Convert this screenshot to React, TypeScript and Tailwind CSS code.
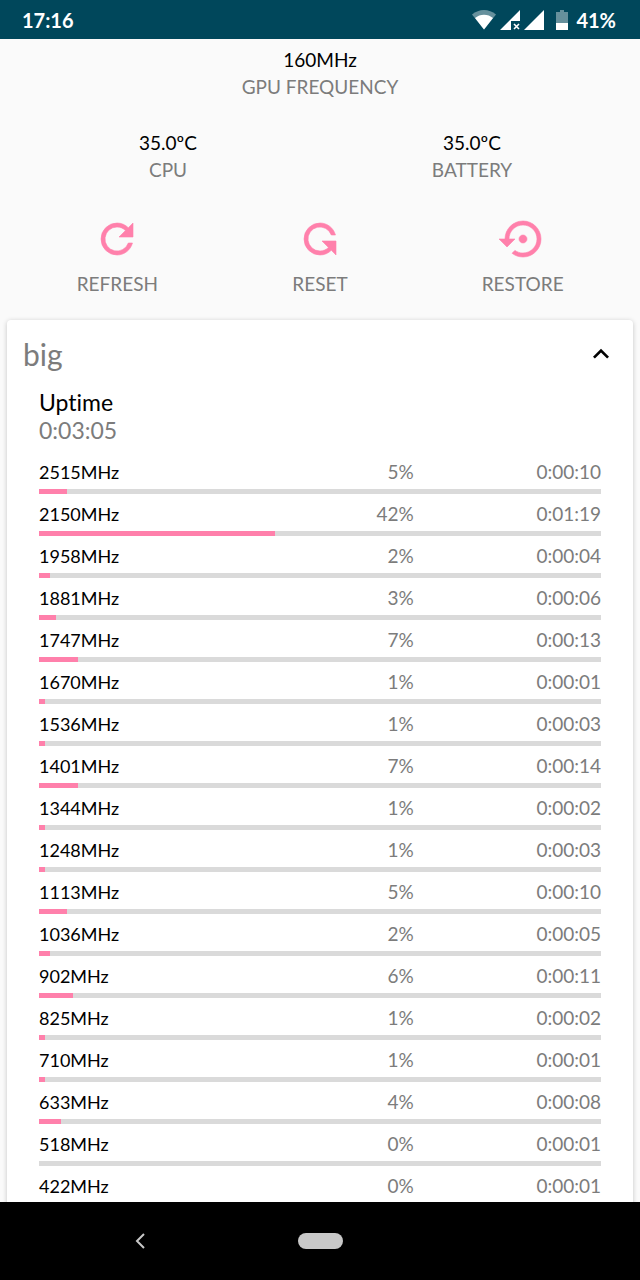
import React from 'react';

interface FrequencyState {
  frequency: number;
  percent: number;
  time: string;
}

const states: FrequencyState[] = [
  { frequency: 2515, percent: 5, time: '0:00:10' },
  { frequency: 2150, percent: 42, time: '0:01:19' },
  { frequency: 1958, percent: 2, time: '0:00:04' },
  { frequency: 1881, percent: 3, time: '0:00:06' },
  { frequency: 1747, percent: 7, time: '0:00:13' },
  { frequency: 1670, percent: 1, time: '0:00:01' },
  { frequency: 1536, percent: 1, time: '0:00:03' },
  { frequency: 1401, percent: 7, time: '0:00:14' },
  { frequency: 1344, percent: 1, time: '0:00:02' },
  { frequency: 1248, percent: 1, time: '0:00:03' },
  { frequency: 1113, percent: 5, time: '0:00:10' },
  { frequency: 1036, percent: 2, time: '0:00:05' },
  { frequency: 902, percent: 6, time: '0:00:11' },
  { frequency: 825, percent: 1, time: '0:00:02' },
  { frequency: 710, percent: 1, time: '0:00:01' },
  { frequency: 633, percent: 4, time: '0:00:08' },
  { frequency: 518, percent: 0, time: '0:00:01' },
  { frequency: 422, percent: 0, time: '0:00:01' },
];

const REFRESH_PATH =
  'M17.65 6.35C16.2 4.9 14.21 4 12 4a8 8 0 0 0 0 16c3.73 0 6.84-2.55 7.73-6h-2.08A6 6 0 1 1 12 6c1.66 0 3.14.69 4.22 1.78L13 11h7V4z';

const RESTORE_PATH =
  'M14 12c0-1.1-.9-2-2-2s-2 .9-2 2 .9 2 2 2 2-.9 2-2zm-2-9c-4.97 0-9 4.03-9 9H0l4 4 4-4H5c0-3.87 3.13-7 7-7s7 3.13 7 7-3.13 7-7 7c-1.51 0-2.91-.49-4.06-1.3l-1.42 1.44C8.04 20.3 9.94 21 12 21c4.97 0 9-4.03 9-9s-4.03-9-9-9z';

const StatusBar: React.FC = () => (
  <header className="flex h-[39px] shrink-0 items-center justify-between bg-[#00475b] pl-[22px] pr-6 text-xl font-bold text-white">
    <span>17:16</span>
    <div className="flex items-center gap-1">
      <svg className="h-5 w-6" viewBox="0 0 24 20" fill="currentColor" aria-label="Wi-Fi">
        <path d="M0 4.5C7-1.5 17-1.5 24 4.5L12 19.5z" opacity="0.4" />
        <path d="M3 8C8 3.500 16 3.500 21 8L12 19.500z" />
      </svg>
      <svg className="h-5 w-5" viewBox="0 0 20 20" fill="currentColor" aria-label="No data on SIM 1">
        <path d="M20 0v11h-9v9H0z" />
        <path d="M14 14l5 5M19 14l-5 5" fill="none" stroke="currentColor" strokeWidth="1.6" />
      </svg>
      <svg className="h-5 w-5" viewBox="0 0 20 20" fill="currentColor" aria-label="SIM 2 signal">
        <path d="M20 0v20H0z" />
      </svg>
      <svg className="ml-2 mr-1 h-5 w-3" viewBox="0 0 12 20" fill="currentColor" aria-label="Battery">
        <path d="M4 0h4v2h4v11H0V2h4z" opacity="0.4" />
        <path d="M0 13h12v7H0z" />
      </svg>
      <span>41%</span>
    </div>
  </header>
);

const Reading: React.FC<{ value: string; label: string }> = ({ value, label }) => (
  <div className="text-center text-[19px] leading-[27px]">
    <p className="text-black">{value}</p>
    <p className="text-[#7c7c7c]">{label}</p>
  </div>
);

const ActionButton: React.FC<{ label: string; path: string; flipped?: boolean }> = ({ label, path, flipped = false }) => (
  <button type="button" className="flex flex-col items-center gap-[7px] text-[19px] leading-[27px] text-[#7c7c7c]">
    <svg
      className={`size-12 text-[#ff80ab] ${flipped ? '-scale-y-100' : ''}`}
      viewBox="0 0 24 24"
      fill="currentColor"
      stroke="currentColor"
      strokeWidth="0.3"
    >
      <path d={path} />
    </svg>
    {label}
  </button>
);

const FrequencyRow: React.FC<FrequencyState> = ({ frequency, percent, time }) => (
  <li className="h-[42px]">
    <div className="grid grid-cols-3 text-[19px] leading-7 text-[#7c7c7c]">
      <span className="text-lg leading-7 text-black">{frequency}MHz</span>
      <span className="text-right">{percent}%</span>
      <span className="text-right">{time}</span>
    </div>
    <div className="mt-[3px] h-[5px] bg-[#dadada]">
      <div className="h-full bg-[#ff80ab]" style={{ width: `${percent}%` }}></div>
    </div>
  </li>
);

const App: React.FC = () => {
  return (
    <div className="flex h-dvh flex-col bg-[#fafafa] font-['Lato',sans-serif] [font-variant-ligatures:none]">
      <StatusBar />

      <main className="min-h-0 flex-1 overflow-hidden pt-[7px]">
        <Reading value="160MHz" label="GPU FREQUENCY" />

        <div className="mt-[29px] grid grid-cols-2 px-4">
          <Reading value="35.0ºC" label="CPU" />
          <Reading value="35.0ºC" label="BATTERY" />
        </div>

        <div className="mt-8 grid grid-cols-3 px-4">
          <ActionButton label="REFRESH" path={REFRESH_PATH} />
          <ActionButton label="RESET" path={REFRESH_PATH} flipped />
          <ActionButton label="RESTORE" path={RESTORE_PATH} />
        </div>

        <section className="mx-[7px] mt-[23px] rounded-sm bg-white shadow-[0_1px_5px_rgba(0,0,0,0.22)]">
          <div className="flex items-center justify-between py-[14px] pl-4 pr-4">
            <h2 className="text-3xl leading-10 text-[#7c7c7c]">big</h2>
            <button type="button" aria-label="Collapse">
              <svg className="size-8" viewBox="0 0 24 24" fill="black">
                <path d="M12 8l-6 6 1.41 1.41L12 10.83l4.590 4.580L18 14z" />
              </svg>
            </button>
          </div>

          <div className="px-8 text-[23px] leading-7">
            <p className="text-black">Uptime</p>
            <p className="text-[#7c7c7c]">0:03:05</p>
          </div>

          <ul className="mt-[14px] px-8">
            {states.map((state) => (
              <FrequencyRow key={state.frequency} {...state} />
            ))}
          </ul>
        </section>
      </main>

      <nav className="grid h-[78px] shrink-0 grid-cols-[7fr_2fr_7fr] items-center bg-black text-[#c8c8c8]">
        <button type="button" aria-label="Back" className="justify-self-center">
          <svg className="size-5" viewBox="0 0 20 20" fill="none" stroke="currentColor" strokeWidth="2">
            <path d="M14 3L7 10l7 7" />
          </svg>
        </button>
        <button type="button" aria-label="Home" className="h-4 w-[45px] justify-self-center rounded-full bg-[#c8c8c8]"></button>
      </nav>
    </div>
  );
};

export default App;
